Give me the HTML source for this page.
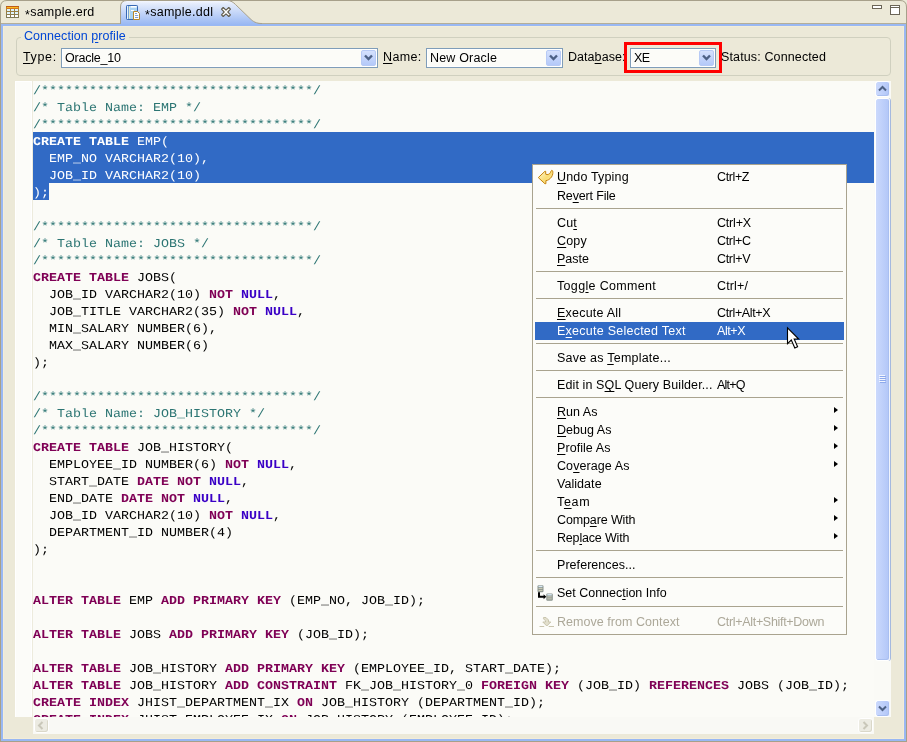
<!DOCTYPE html>
<html>
<head>
<meta charset="utf-8">
<title>sample.ddl</title>
<style>
html,body{margin:0;padding:0;}
#root{position:absolute;left:0;top:0;width:907px;height:742px;will-change:transform;overflow:hidden;}
body{width:907px;height:742px;overflow:hidden;background:#ECE9D8;position:relative;font-family:"Liberation Sans",sans-serif;font-size:12px;color:#000;}
.abs{position:absolute;}
u{text-decoration:underline;text-underline-offset:1.5px;}
/* frame */
#blueL{left:1px;top:24px;width:2px;height:717px;background:#99B8F3;}
#blueR{left:904px;top:24px;width:2px;height:717px;background:#99B8F3;}
#blueB{left:1px;top:739px;width:905px;height:2px;background:#99B8F3;}
#blueT{left:1px;top:24px;width:905px;height:2px;background:#99B8F3;}
#crm{left:3px;top:26px;width:901px;height:713px;box-sizing:border-box;border:1px solid #F3EDD8;}
/* tabs */
.tabtxt{top:5px;font-size:12.5px;white-space:nowrap;}
/* form */
.lbl{top:50px;font-size:12.5px;white-space:nowrap;}
.combo{top:48px;height:20px;box-sizing:border-box;border:1px solid #7F9DB9;background:#FCFCF8;box-shadow:inset 0 0 0 1px #fff;}
.combo span{position:absolute;left:3px;top:2px;font-size:12.5px;white-space:nowrap;}
.cbtn{position:absolute;right:1px;top:1px;width:15px;height:16px;border-radius:2px;background:linear-gradient(#D5E1FD,#B4C9F9);border:1px solid #B7CAF5;box-sizing:border-box;}
/* editor */
#editor{left:15px;top:81px;width:859px;height:636px;background:#FBFBF7;overflow:hidden;}
#gutter{left:0;top:0;width:17px;height:636px;background:#FCFCF9;box-sizing:border-box;border:1px solid #fff;border-bottom:none;box-shadow:1px 0 0 #EDEBDD;}
.code{text-rendering:geometricPrecision;position:absolute;left:18px;top:0;font-family:"Liberation Mono",monospace;font-size:13.333px;color:#000;}
.ln{position:absolute;left:0;height:19px;line-height:19px;white-space:pre;transform:scaleY(0.9);transform-origin:0 0;}
.k{color:#7F0055;font-weight:bold;}
.c{color:#2C7573;}
.n{color:#3A00C6;font-weight:bold;}
.sel{color:#fff;}
.sel .k{color:#fff;}
.selrow{position:absolute;left:18px;width:841px;height:17px;background:#316AC5;}
.sbb{box-sizing:border-box;border:1px solid #fff;border-right-color:#F0F4FE;border-radius:3px;background:linear-gradient(90deg,#CBD9FC,#BCCEFA 60%,#B2C6F7);box-shadow:inset -1px -1px 0 #A9BFF0;}
.sbd{box-sizing:border-box;border:1px solid #fff;border-radius:3px;background:#ECEBE2;box-shadow:inset -1px -1px 0 #DAD8C9;}
/* menu */
#menu{left:532px;top:164px;width:315px;height:471px;box-sizing:border-box;border:1px solid #A9A38F;background:#FCFCF9;}
.mi{position:absolute;left:2px;width:309px;height:18px;font-size:12.5px;white-space:nowrap;}
.mi .t{position:absolute;left:22px;top:2px;}
.mi .s{position:absolute;left:182px;top:2px;}
.mi.hl{background:#316AC5;color:#fff;}
.mi.dis{color:#ACA899;}
.sep{position:absolute;left:3px;width:307px;height:1px;background:#A9A38F;}
.arr{position:absolute;left:299px;top:4px;width:0;height:0;border-left:4px solid #000;border-top:3.5px solid transparent;border-bottom:3.5px solid transparent;}
</style>
</head>
<body>
<div id="root">
<!-- frame -->
<svg class="abs" style="left:0;top:0" width="907" height="742" viewBox="0 0 907 742">
 <path d="M0.5 742V7Q0.5 0.5 7 0.5H900Q906.5 0.5 906.5 7V742" fill="none" stroke="#A7A08A" stroke-width="1"/>
 <path d="M0 741.5H907" stroke="#A7A08A" stroke-width="1"/>
 <path d="M1 23.5H906" stroke="#B4AE98" stroke-width="1"/>
</svg>
<div class="abs" id="blueT"></div>
<div class="abs" id="blueL"></div>
<div class="abs" id="blueR"></div>
<div class="abs" id="blueB"></div>
<div class="abs" id="crm"></div>

<!-- TABS -->
<div id="tabs">
<!-- inactive tab icon -->
<svg class="abs" style="left:6px;top:6px" width="13" height="12" viewBox="0 0 13 12" shape-rendering="crispEdges">
 <defs><linearGradient id="ig" x1="0" y1="0" x2="0" y2="1"><stop offset="0" stop-color="#B5842C"/><stop offset="1" stop-color="#7C7858"/></linearGradient></defs>
 <rect x="0" y="0" width="13" height="12" fill="url(#ig)"/>
 <rect x="0" y="0" width="13" height="1" fill="#BE5A1C"/>
 <rect x="1" y="1" width="11" height="1" fill="#FBBC20"/>
 <rect x="0" y="2" width="13" height="1" fill="#D4741C"/>
 <g fill="#DDF2FC"><rect x="1" y="3" width="3" height="2"/><rect x="5" y="3" width="3" height="2"/><rect x="9" y="3" width="3" height="2"/>
 <rect x="1" y="6" width="3" height="2"/><rect x="5" y="6" width="3" height="2"/><rect x="9" y="6" width="3" height="2"/></g>
 <g fill="#FFFFFF"><rect x="1" y="9" width="3" height="2"/><rect x="5" y="9" width="3" height="2"/><rect x="9" y="9" width="3" height="2"/></g>
</svg>
<div class="abs tabtxt" style="left:25px;letter-spacing:0.26px"><span style="position:relative;top:3px">*</span>sample.erd</div>
<!-- active tab -->
<svg class="abs" style="left:0;top:0" width="300" height="26" viewBox="0 0 300 26">
 <defs><linearGradient id="tg" x1="0" y1="0" x2="0" y2="1"><stop offset="0" stop-color="#F7F9FE"/><stop offset="0.12" stop-color="#E6EDFC"/><stop offset="1" stop-color="#99B8F3"/></linearGradient></defs>
 <path d="M120.5 24.5V7Q120.5 0.5 127 0.5H227C231 0.5 233.5 2.5 235.5 4.5L250 18.5C253 21.5 256 23.5 262 23.5V24.5Z" fill="url(#tg)"/>
 <path d="M120.5 24V7Q120.5 0.5 127 0.5H227C231 0.5 233.5 2.5 235.5 4.5L250 18.5C253 21.5 256 23.5 262 23.5" fill="none" stroke="#A7A08A" stroke-width="1"/>
</svg>
<svg class="abs" style="left:126px;top:5px" width="15" height="15" viewBox="0 0 15 15">
 <rect x="0.5" y="0.5" width="11" height="14" rx="0.8" fill="#A9D2F2" stroke="#3768B4"/>
 <rect x="1" y="1" width="1.1" height="13" fill="#E8F4FD"/>
 <rect x="2.1" y="1" width="0.9" height="13" fill="#6F9BD3"/>
 <rect x="3.1" y="1.5" width="0.8" height="12" fill="#EEF0C8"/>
 <rect x="4.6" y="1" width="6" height="1.6" fill="#FFFFFF"/>
 <rect x="5" y="5" width="3" height="1" fill="#FFFFFF"/>
 <path d="M7.5 6.5H11.5L13.5 8.5V14.5H7.5Z" fill="#FFFFFF" stroke="#B5862B" stroke-width="1"/>
 <path d="M9 8.5H11M9 10.5H12.2M9 12.5H12.2" stroke="#7EA0D6" stroke-width="1"/>
</svg>
<div class="abs tabtxt" style="left:145px;letter-spacing:0.267px"><span style="position:relative;top:3px">*</span>sample.ddl</div>
<svg class="abs" style="left:220px;top:6px" width="12" height="12" viewBox="0 0 12 12">
 <path d="M1.5 3.2L3.2 1.5L6 4.2L8.8 1.5L10.5 3.2L7.8 6L10.5 8.8L8.8 10.5L6 7.8L3.2 10.5L1.5 8.8L4.2 6Z" fill="#FFFFFF" stroke="#5F5A4B" stroke-width="1.1" stroke-linejoin="round"/>
</svg>
<!-- min / max -->
<svg class="abs" style="left:872px;top:5px" width="10" height="4" viewBox="0 0 10 4"><rect x="0.5" y="0.5" width="9" height="3" fill="#fff" stroke="#6B6557"/></svg>
<svg class="abs" style="left:890px;top:5px" width="10" height="10" viewBox="0 0 10 10"><rect x="0.5" y="0.5" width="9" height="9" fill="#fff" stroke="#6B6557"/><path d="M0 2.5H10" stroke="#6B6557"/></svg>
</div>
<!-- FORM -->
<div id="form">
<div class="abs" style="left:16px;top:37px;width:875px;height:39px;box-sizing:border-box;border:1px solid #D0D0BF;border-radius:4px;"></div>
<div class="abs" style="left:21px;top:29px;background:#ECE9D8;padding:0 3px;color:#0046D5;font-size:12.5px;letter-spacing:0.055px;white-space:nowrap;">Connection <u>p</u>rofile</div>
<div class="abs lbl" style="left:23px;letter-spacing:0.652px"><u>T</u>ype:</div>
<div class="abs combo" style="left:61px;width:317px"><span style="letter-spacing:-0.223px">Oracle_10</span><div class="cbtn"><svg style="position:absolute;left:2px;top:3px" width="9" height="7" viewBox="0 0 9 7"><path d="M1 1.5L4.5 5L8 1.5" fill="none" stroke="#4D6185" stroke-width="2.4"/></svg></div></div>
<div class="abs lbl" style="left:383px;letter-spacing:0.343px"><u>N</u>ame:</div>
<div class="abs combo" style="left:426px;width:137px"><span style="letter-spacing:0.178px">New Oracle</span><div class="cbtn"><svg style="position:absolute;left:2px;top:3px" width="9" height="7" viewBox="0 0 9 7"><path d="M1 1.5L4.5 5L8 1.5" fill="none" stroke="#4D6185" stroke-width="2.4"/></svg></div></div>
<div class="abs lbl" style="left:568px;letter-spacing:0.05px">Data<u>b</u>ase:</div>
<div class="abs combo" style="left:630px;width:86px"><span style="letter-spacing:-0.587px">XE</span><div class="cbtn"><svg style="position:absolute;left:2px;top:3px" width="9" height="7" viewBox="0 0 9 7"><path d="M1 1.5L4.5 5L8 1.5" fill="none" stroke="#4D6185" stroke-width="2.4"/></svg></div></div>
<div class="abs" style="left:624px;top:42px;width:98px;height:31px;box-sizing:border-box;border:3px solid #FF0000;"></div>
<div class="abs lbl" style="left:721px;letter-spacing:0.128px">Status: Connected</div>
</div>
<!-- EDITOR -->
<div class="abs" id="editor">
<div class="abs" id="gutter"></div>
<div class="selrow" style="top:51px"></div>
<div class="selrow" style="top:68px"></div>
<div class="selrow" style="top:85px"></div>
<div class="selrow" style="top:102px;width:16px"></div>
<div class="code">
<div class="ln" style="top:2.3px"><span class="c">/**********************************/</span></div>
<div class="ln" style="top:19.3px"><span class="c">/* Table Name: EMP */</span></div>
<div class="ln" style="top:36.3px"><span class="c">/**********************************/</span></div>
<div class="ln" style="top:53.3px"><span class="sel"><span class="k">CREATE</span> <span class="k">TABLE</span> EMP(</span></div>
<div class="ln" style="top:70.3px"><span class="sel">  EMP_NO VARCHAR2(10),</span></div>
<div class="ln" style="top:87.3px"><span class="sel">  JOB_ID VARCHAR2(10)</span></div>
<div class="ln" style="top:104.3px"><span class="sel">);</span></div>
<div class="ln" style="top:138.3px"><span class="c">/**********************************/</span></div>
<div class="ln" style="top:155.3px"><span class="c">/* Table Name: JOBS */</span></div>
<div class="ln" style="top:172.3px"><span class="c">/**********************************/</span></div>
<div class="ln" style="top:189.3px"><span class="k">CREATE</span> <span class="k">TABLE</span> JOBS(</div>
<div class="ln" style="top:206.3px">  JOB_ID VARCHAR2(10) <span class="k">NOT</span> <span class="n">NULL</span>,</div>
<div class="ln" style="top:223.3px">  JOB_TITLE VARCHAR2(35) <span class="k">NOT</span> <span class="n">NULL</span>,</div>
<div class="ln" style="top:240.3px">  MIN_SALARY NUMBER(6),</div>
<div class="ln" style="top:257.3px">  MAX_SALARY NUMBER(6)</div>
<div class="ln" style="top:274.3px">);</div>
<div class="ln" style="top:308.3px"><span class="c">/**********************************/</span></div>
<div class="ln" style="top:325.3px"><span class="c">/* Table Name: JOB_HISTORY */</span></div>
<div class="ln" style="top:342.3px"><span class="c">/**********************************/</span></div>
<div class="ln" style="top:359.3px"><span class="k">CREATE</span> <span class="k">TABLE</span> JOB_HISTORY(</div>
<div class="ln" style="top:376.3px">  EMPLOYEE_ID NUMBER(6) <span class="k">NOT</span> <span class="n">NULL</span>,</div>
<div class="ln" style="top:393.3px">  START_DATE <span class="k">DATE</span> <span class="k">NOT</span> <span class="n">NULL</span>,</div>
<div class="ln" style="top:410.3px">  END_DATE <span class="k">DATE</span> <span class="k">NOT</span> <span class="n">NULL</span>,</div>
<div class="ln" style="top:427.3px">  JOB_ID VARCHAR2(10) <span class="k">NOT</span> <span class="n">NULL</span>,</div>
<div class="ln" style="top:444.3px">  DEPARTMENT_ID NUMBER(4)</div>
<div class="ln" style="top:461.3px">);</div>
<div class="ln" style="top:512.3px"><span class="k">ALTER</span> <span class="k">TABLE</span> EMP <span class="k">ADD</span> <span class="k">PRIMARY</span> <span class="k">KEY</span> (EMP_NO, JOB_ID);</div>
<div class="ln" style="top:546.3px"><span class="k">ALTER</span> <span class="k">TABLE</span> JOBS <span class="k">ADD</span> <span class="k">PRIMARY</span> <span class="k">KEY</span> (JOB_ID);</div>
<div class="ln" style="top:580.3px"><span class="k">ALTER</span> <span class="k">TABLE</span> JOB_HISTORY <span class="k">ADD</span> <span class="k">PRIMARY</span> <span class="k">KEY</span> (EMPLOYEE_ID, START_DATE);</div>
<div class="ln" style="top:597.3px"><span class="k">ALTER</span> <span class="k">TABLE</span> JOB_HISTORY <span class="k">ADD</span> <span class="k">CONSTRAINT</span> FK_JOB_HISTORY_0 <span class="k">FOREIGN</span> <span class="k">KEY</span> (JOB_ID) <span class="k">REFERENCES</span> JOBS (JOB_ID);</div>
<div class="ln" style="top:614.3px"><span class="k">CREATE</span> <span class="k">INDEX</span> JHIST_DEPARTMENT_IX <span class="k">ON</span> JOB_HISTORY (DEPARTMENT_ID);</div>
<div class="ln" style="top:631.3px"><span class="k">CREATE</span> <span class="k">INDEX</span> JHIST_EMPLOYEE_IX <span class="k">ON</span> JOB_HISTORY (EMPLOYEE_ID);</div>
</div>
</div>
<!-- SCROLLBARS -->
<div id="scroll">
<!-- vertical -->
<div class="abs" style="left:874px;top:81px;width:17px;height:636px;background:#FAFAF6;"></div>
<div class="abs sbb" style="left:875px;top:81px;width:15px;height:16px;"></div>
<svg class="abs" style="left:878px;top:85px" width="9" height="7" viewBox="0 0 9 7"><path d="M1 5.5L4.5 2L8 5.5" fill="none" stroke="#4D6185" stroke-width="2"/></svg>
<div class="abs sbb" style="left:875px;top:98px;width:15px;height:563px;box-shadow:inset -1px -1px 0 #A9BFF0,1px 0 0 #A5B9DF;"></div>
<svg class="abs" style="left:879px;top:375px" width="8" height="9" viewBox="0 0 8 9" shape-rendering="crispEdges"><path d="M0 0.5H6M0 2.5H6M0 4.5H6M0 6.5H6" stroke="#F1F5FE" stroke-width="1"/><path d="M1 1.5H7M1 3.5H7M1 5.5H7M1 7.5H7" stroke="#8DA9EC" stroke-width="1"/></svg>
<div class="abs sbb" style="left:875px;top:700px;width:15px;height:17px;"></div>
<svg class="abs" style="left:878px;top:705px" width="9" height="7" viewBox="0 0 9 7"><path d="M1 1.5L4.5 5L8 1.5" fill="none" stroke="#4D6185" stroke-width="2"/></svg>
<!-- horizontal -->
<div class="abs" style="left:33px;top:717px;width:841px;height:17px;background:#F9F9F5;"></div>
<div class="abs sbd" style="left:34px;top:718px;width:15px;height:15px;"></div>
<svg class="abs" style="left:37px;top:721px" width="7" height="9" viewBox="0 0 7 9"><path d="M5.5 1L2 4.5L5.5 8" fill="none" stroke="#C9C7B9" stroke-width="2"/></svg>
<div class="abs sbd" style="left:858px;top:718px;width:15px;height:15px;"></div>
<svg class="abs" style="left:862px;top:721px" width="7" height="9" viewBox="0 0 7 9"><path d="M1.5 1L5 4.5L1.5 8" fill="none" stroke="#C9C7B9" stroke-width="2"/></svg>
</div>
<!-- MENU -->
<div class="abs" id="menu">
<div class="mi " style="top:3px"><span class="t" style="letter-spacing:0.163px"><u>U</u>ndo Typing</span><span class="s" style="letter-spacing:-0.375px">Ctrl+Z</span></div>
<div class="mi " style="top:22px"><span class="t" style="letter-spacing:-0.164px">Re<u>v</u>ert File</span></div>
<div class="sep" style="top:43px"></div>
<div class="mi " style="top:49px"><span class="t" style="letter-spacing:0.166px">Cu<u>t</u></span><span class="s" style="letter-spacing:-0.196px">Ctrl+X</span></div>
<div class="mi " style="top:67px"><span class="t" style="letter-spacing:0.171px"><u>C</u>opy</span><span class="s" style="letter-spacing:-0.336px">Ctrl+C</span></div>
<div class="mi " style="top:85px"><span class="t" style="letter-spacing:-0.021px"><u>P</u>aste</span><span class="s" style="letter-spacing:-0.316px">Ctrl+V</span></div>
<div class="sep" style="top:106px"></div>
<div class="mi " style="top:112px"><span class="t" style="letter-spacing:0.331px">Togg<u>l</u>e Comment</span><span class="s" style="letter-spacing:0.136px">Ctrl+/</span></div>
<div class="sep" style="top:133px"></div>
<div class="mi " style="top:139px"><span class="t" style="letter-spacing:0.214px"><u>E</u>xecute All</span><span class="s" style="letter-spacing:-0.385px">Ctrl+Alt+X</span></div>
<div class="mi hl" style="top:157px"><span class="t" style="letter-spacing:0.247px">E<u>x</u>ecute Selected Text</span><span class="s" style="letter-spacing:-0.409px">Alt+X</span></div>
<div class="sep" style="top:178px"></div>
<div class="mi " style="top:184px"><span class="t" style="letter-spacing:0.224px">Save as <u>T</u>emplate...</span></div>
<div class="sep" style="top:205px"></div>
<div class="mi " style="top:211px"><span class="t" style="letter-spacing:0.11px">Edit in S<u>Q</u>L Query Builder...</span><span class="s" style="letter-spacing:-0.756px">Alt+Q</span></div>
<div class="sep" style="top:232px"></div>
<div class="mi " style="top:238px"><span class="t" style="letter-spacing:0.018px"><u>R</u>un As</span><i class="arr"></i></div>
<div class="mi " style="top:256px"><span class="t" style="letter-spacing:0.026px"><u>D</u>ebug As</span><i class="arr"></i></div>
<div class="mi " style="top:274px"><span class="t" style="letter-spacing:0.065px"><u>P</u>rofile As</span><i class="arr"></i></div>
<div class="mi " style="top:292px"><span class="t" style="letter-spacing:0.082px">Co<u>v</u>erage As</span><i class="arr"></i></div>
<div class="mi " style="top:310px"><span class="t" style="letter-spacing:0.05px">Validate</span></div>
<div class="mi " style="top:328px"><span class="t" style="letter-spacing:0.674px">T<u>e</u>am</span><i class="arr"></i></div>
<div class="mi " style="top:346px"><span class="t" style="letter-spacing:-0.126px">Comp<u>a</u>re With</span><i class="arr"></i></div>
<div class="mi " style="top:364px"><span class="t" style="letter-spacing:-0.178px">Rep<u>l</u>ace With</span><i class="arr"></i></div>
<div class="sep" style="top:385px"></div>
<div class="mi " style="top:391px"><span class="t" style="letter-spacing:0.052px">Preferences...</span></div>
<div class="sep" style="top:412px"></div>
<div class="mi " style="top:419px"><span class="t" style="letter-spacing:-0.013px">Set Connec<u>t</u>ion Info</span></div>
<div class="sep" style="top:441px"></div>
<div class="mi dis" style="top:448px"><span class="t" style="letter-spacing:0.046px">Remove from Context</span><span class="s" style="letter-spacing:-0.306px">Ctrl+Alt+Shift+Down</span></div>
</div>
<svg class="abs" style="left:537px;top:169px" width="17" height="16" viewBox="-1 -1 17 16">
 <defs><linearGradient id="ug" x1="0" y1="0" x2="1" y2="1"><stop offset="0" stop-color="#FFFBE0"/><stop offset="0.55" stop-color="#F9DC74"/><stop offset="1" stop-color="#FCEDB4"/></linearGradient></defs>
 <path d="M0.3 7.6L6.9 1.3H7.7V4.2C9.5 5.2 11.5 4.2 12.4 2.6C12.9 1.7 13 0.6 13.8 0.3C14.8 0.5 15 1.9 14.8 3.6C14.5 6 13 8.2 10.8 9.6C9.8 10.2 8.8 10.5 7.9 10.6V13.7H6.9Z" fill="url(#ug)" stroke="#C5820A" stroke-width="1" stroke-linejoin="round"/>
</svg>
<svg class="abs" style="left:537px;top:585px" width="17" height="17" viewBox="0 0 17 17">
 <rect x="0.5" y="0.3" width="6" height="7" rx="1.2" fill="#8A948E"/>
 <path d="M1.5 1.5H5.5" stroke="#D8E8F4" stroke-width="1.4"/><path d="M1.5 3.6H5.5M1.5 5.6H5.5" stroke="#D9D6BE" stroke-width="0.9"/>
 <rect x="9.3" y="8.5" width="6.5" height="7.2" rx="1.2" fill="#8A948E"/>
 <path d="M10.3 9.8H14.8" stroke="#D8E8F4" stroke-width="1.4"/><path d="M10.3 11.9H14.8M10.3 13.9H14.8" stroke="#D9D6BE" stroke-width="0.9"/>
 <path d="M2 7.3V11.7H7" fill="none" stroke="#000" stroke-width="2"/>
 <path d="M6.6 9.2L9.3 11.7L6.6 14.2Z" fill="#000"/>
</svg>
<svg class="abs" style="left:539px;top:616px" width="16" height="12" viewBox="0 0 16 12">
 <path d="M4.5 1.5H7L9.5 4V6H11.8L7.8 10L3.8 6H6.5V4.8L4.5 2.8Z" fill="#E2DFCC" stroke="#C9C5AE" stroke-width="1" stroke-linejoin="round"/>
 <path d="M0.5 10.5H5.2M9.7 10.5H15" stroke="#C9C5AE" stroke-width="1.2"/>
</svg>
<svg class="abs" style="left:786px;top:326px" width="14" height="23" viewBox="-1 -1 14 23">
 <path d="M0.5 0.8V16.6L4.3 13L7.8 21L10.6 19.8L7.2 12H11.7Z" fill="#fff" stroke="#000" stroke-width="1.1" stroke-linejoin="miter"/>
</svg>

</div>
</body>
</html>
